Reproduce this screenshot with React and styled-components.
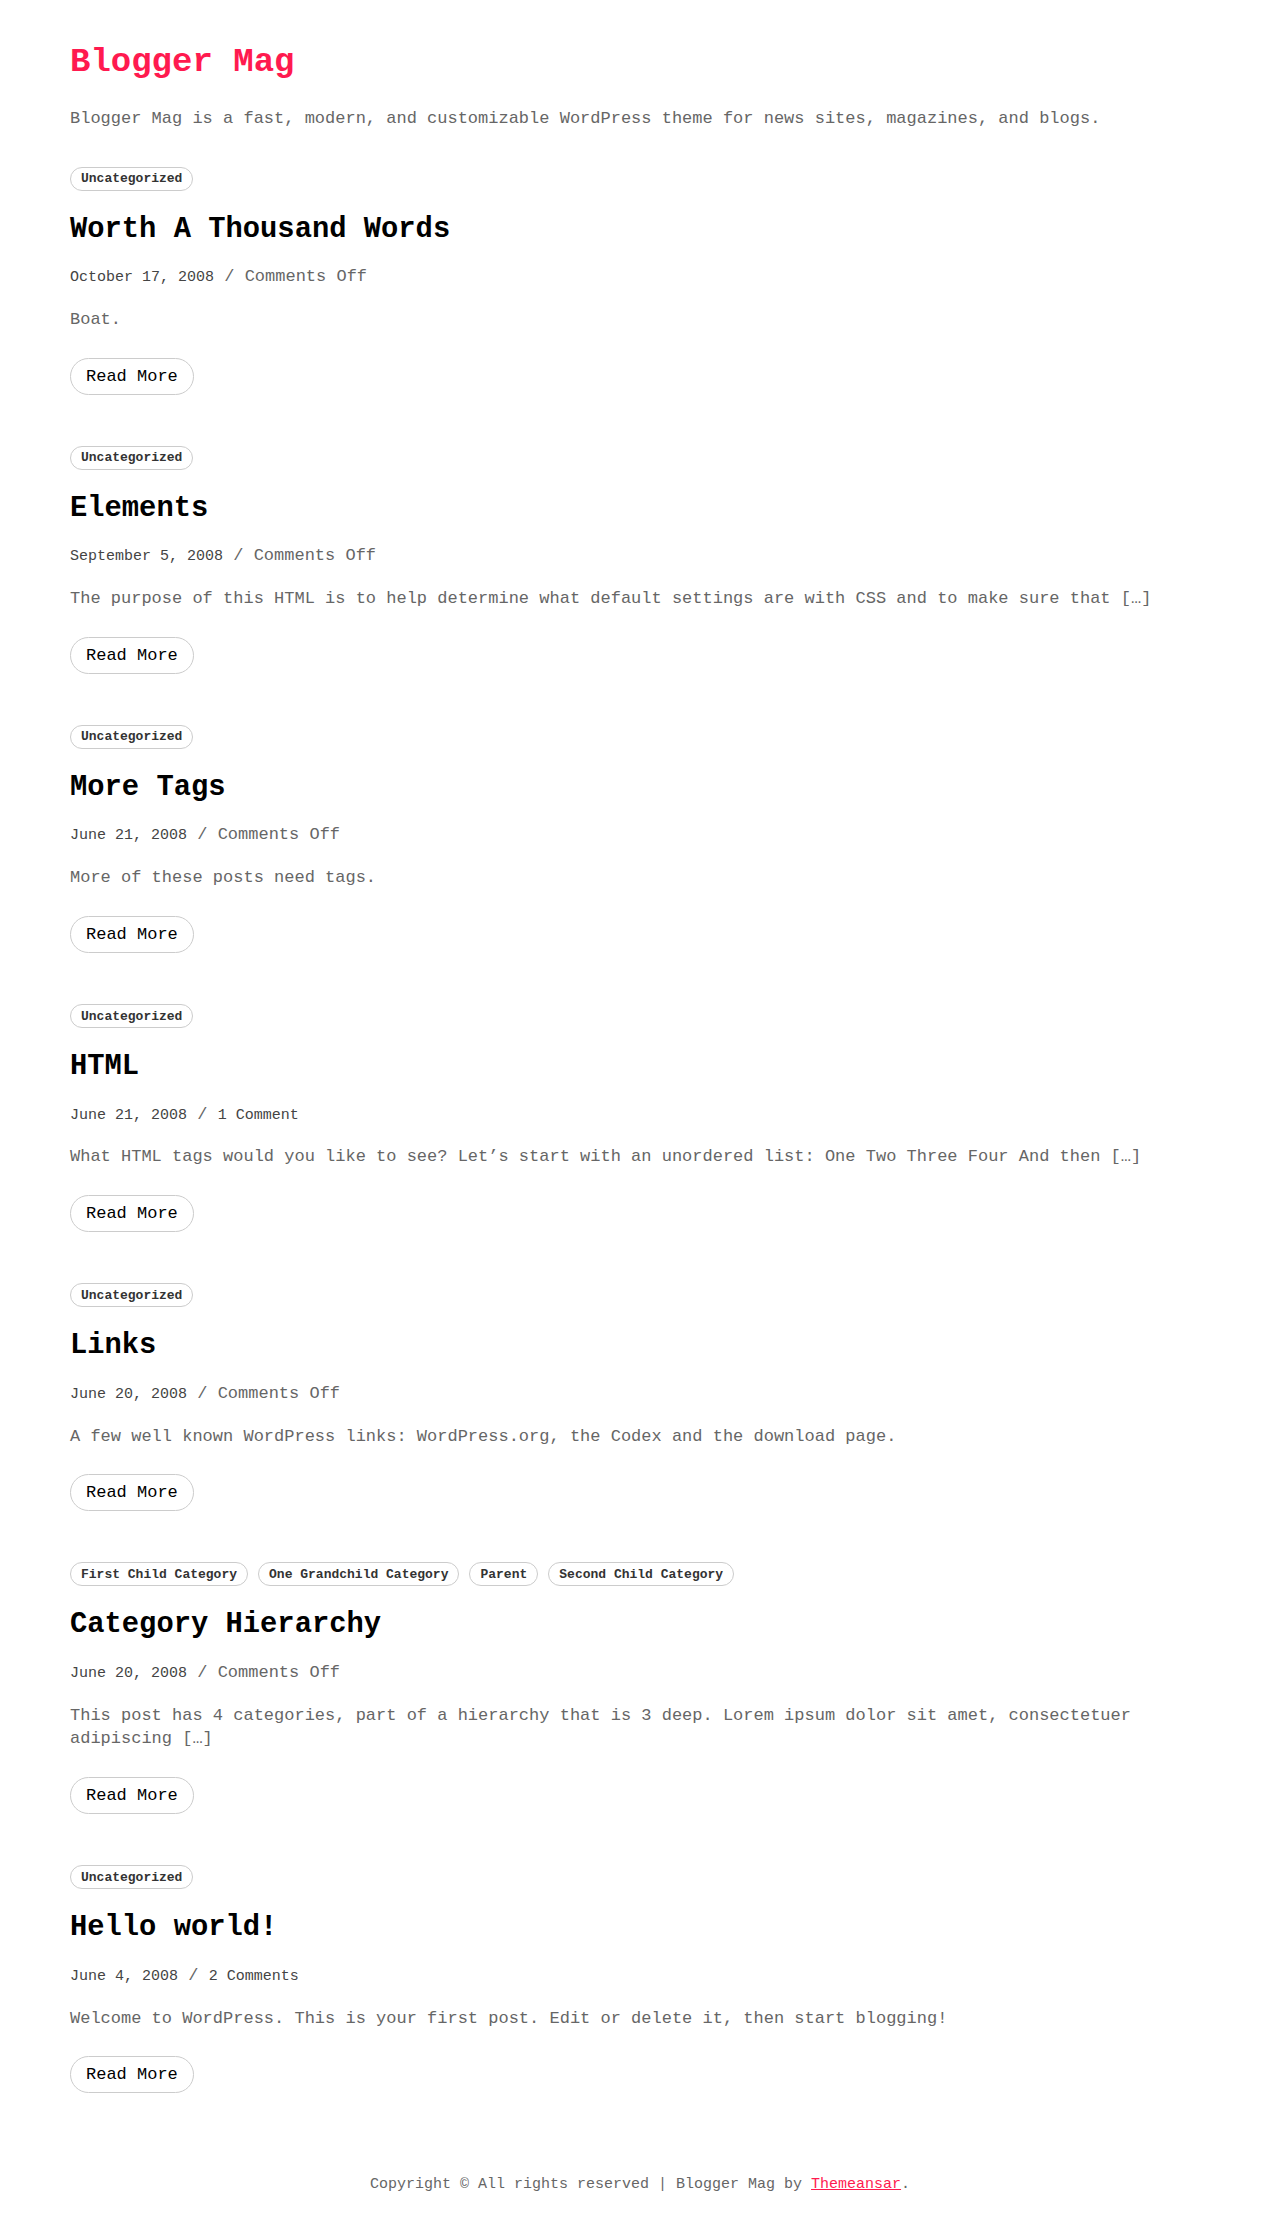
import React from "react";
import styled, { createGlobalStyle } from "styled-components";

const GlobalStyle = createGlobalStyle`
  html, body {
    margin: 0;
    padding: 0;
    background: #fff;
  }
  body {
    font-family: "Liberation Mono", "DejaVu Sans Mono", monospace;
    color: #666;
  }
  * {
    box-sizing: border-box;
  }
`;

const posts = [
  {
    tags: ["Uncategorized"],
    title: "Worth A Thousand Words",
    date: "October 17, 2008",
    comments: "Comments Off",
    excerpt: "Boat.",
  },
  {
    tags: ["Uncategorized"],
    title: "Elements",
    date: "September 5, 2008",
    comments: "Comments Off",
    excerpt:
      "The purpose of this HTML is to help determine what default settings are with CSS and to make sure that […]",
  },
  {
    tags: ["Uncategorized"],
    title: "More Tags",
    date: "June 21, 2008",
    comments: "Comments Off",
    excerpt: "More of these posts need tags.",
  },
  {
    tags: ["Uncategorized"],
    title: "HTML",
    date: "June 21, 2008",
    comments: "1 Comment",
    commentLink: true,
    excerpt:
      "What HTML tags would you like to see? Let’s start with an unordered list: One Two Three Four And then […]",
  },
  {
    tags: ["Uncategorized"],
    title: "Links",
    date: "June 20, 2008",
    comments: "Comments Off",
    excerpt:
      "A few well known WordPress links: WordPress.org, the Codex and the download page.",
  },
  {
    tags: [
      "First Child Category",
      "One Grandchild Category",
      "Parent",
      "Second Child Category",
    ],
    title: "Category Hierarchy",
    date: "June 20, 2008",
    comments: "Comments Off",
    excerpt:
      "This post has 4 categories, part of a hierarchy that is 3 deep. Lorem ipsum dolor sit amet, consectetuer adipiscing […]",
  },
  {
    tags: ["Uncategorized"],
    title: "Hello world!",
    date: "June 4, 2008",
    comments: "2 Comments",
    commentLink: true,
    excerpt:
      "Welcome to WordPress. This is your first post. Edit or delete it, then start blogging!",
  },
];

const Page = styled.div`
  padding: 0 70px;
`;

const Header = styled.header`
  padding-top: 42px;
  margin-bottom: 35.5px;
`;

const SiteTitle = styled.h1`
  margin: 0;
  font-size: 34px;
  line-height: 1.2;
  font-weight: 700;
  color: #ff1a4f;
`;

const SiteDescription = styled.p`
  margin: 24.5px 0 0;
  font-size: 17px;
  line-height: 1.4;
  color: #666;
`;

const PostList = styled.main`
  display: flex;
  flex-direction: column;
  gap: 51px;
  padding-bottom: 43px;
`;

const Article = styled.article`
  display: flex;
  flex-direction: column;
  align-items: flex-start;
`;

const Tags = styled.div`
  display: flex;
  flex-wrap: wrap;
  gap: 10px;
`;

const Tag = styled.a`
  display: inline-flex;
  align-items: center;
  height: 24px;
  padding: 0 10px;
  border: 1px solid #ccc;
  border-radius: 999px;
  font-size: 13px;
  font-weight: 700;
  color: #333;
  text-decoration: none;
`;

const PostTitle = styled.h2`
  margin: 22px 0 0;
  font-size: 28.8px;
  line-height: 1.2;
  font-weight: 700;
  color: #000;
`;

const Meta = styled.div`
  margin-top: 18px;
  font-size: 17px;
  line-height: 1.4;
  color: #666;
`;

const MetaLink = styled.a`
  font-size: 15px;
  color: #444;
  text-decoration: none;
`;

const Excerpt = styled.p`
  margin: 19px 0 0;
  font-size: 17px;
  line-height: 1.4;
  color: #666;
`;

const ReadMore = styled.a`
  display: inline-flex;
  align-items: center;
  height: 37px;
  margin-top: 26px;
  padding: 0 15px;
  border: 1px solid #ccc;
  border-radius: 999px;
  font-size: 17px;
  color: #000;
  text-decoration: none;
`;

const Footer = styled.footer`
  padding: 38px 0 30px;
  text-align: center;
  font-size: 15px;
  line-height: 1.4;
  color: #666;
`;

const FooterLink = styled.a`
  color: #ff1a4f;
  text-decoration: underline;
`;

const Post = ({ post }) => (
  <Article>
    <Tags>
      {post.tags.map((t) => (
        <Tag key={t} href="#">
          {t}
        </Tag>
      ))}
    </Tags>
    <PostTitle>{post.title}</PostTitle>
    <Meta>
      <MetaLink href="#">{post.date}</MetaLink> /{" "}
      {post.commentLink ? (
        <MetaLink href="#">{post.comments}</MetaLink>
      ) : (
        <span>{post.comments}</span>
      )}
    </Meta>
    <Excerpt>{post.excerpt}</Excerpt>
    <ReadMore href="#">Read More</ReadMore>
  </Article>
);

export default function App() {
  return (
    <>
      <GlobalStyle />
      <Page>
        <Header>
          <SiteTitle>Blogger Mag</SiteTitle>
          <SiteDescription>
            Blogger Mag is a fast, modern, and customizable WordPress theme for
            news sites, magazines, and blogs.
          </SiteDescription>
        </Header>
        <PostList>
          {posts.map((p) => (
            <Post key={p.title} post={p} />
          ))}
        </PostList>
      </Page>
      <Footer>
        Copyright © All rights reserved | Blogger Mag by{" "}
        <FooterLink href="#">Themeansar</FooterLink>.
      </Footer>
    </>
  );
}
